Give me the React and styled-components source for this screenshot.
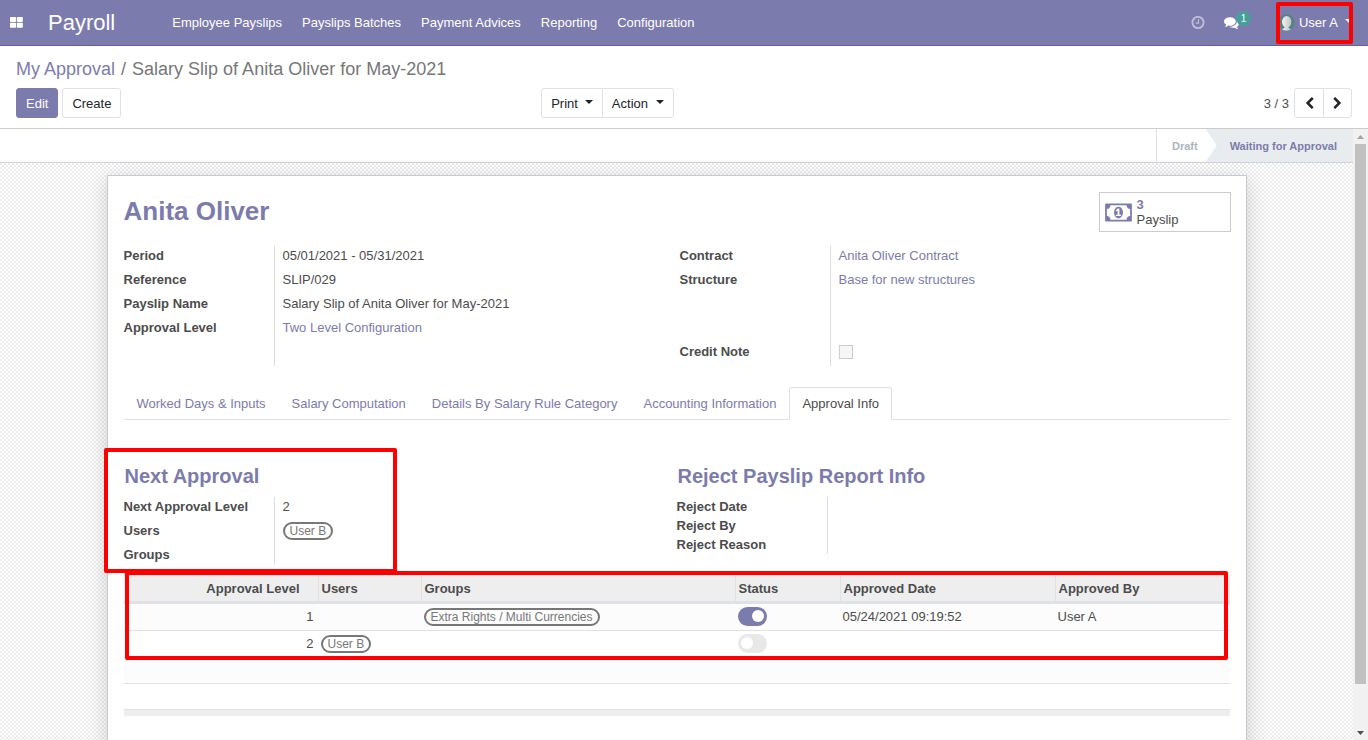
import React from "react";
import styled, { createGlobalStyle } from "styled-components";

const GlobalStyle = createGlobalStyle`
  *, *::before, *::after { box-sizing: border-box; }
  body {
    margin: 0;
    font: 13px/19px "Liberation Sans", Arial, sans-serif;
    color: #4c4c4c;
    background: #fff;
  }
  a { color: #7c7bad; text-decoration: none; }
  button { font: inherit; cursor: pointer; }
  ul, dl, dd { margin: 0; padding: 0; list-style: none; }
`;

const Page = styled.div`
  display: flex;
  flex-direction: column;
  height: 100vh;
`;

const Highlight = styled.div`
  position: absolute;
  inset: ${(p) => p.$inset};
  border: 4px solid #f00;
  border-radius: 2px;
  pointer-events: none;
`;

/* Navigation bar */
const Navbar = styled.header`
  display: flex;
  align-items: center;
  flex-shrink: 0;
  height: 46px;
  background: #7c7bad;
  border-bottom: 1px solid #5f5e97;
  color: #fff;
`;

const AppsButton = styled.button`
  display: flex;
  padding: 0 10px;
  margin-right: 15px;
  border: 0;
  background: none;
  color: #fff;
`;

const Brand = styled.a`
  color: #fff;
  font-size: 22px;
  line-height: 44px;
  margin-right: 47px;
`;

const Menu = styled.nav`
  display: flex;
  flex: 1;
`;

const MenuLink = styled.a`
  padding: 0 10px;
  line-height: 44px;
  color: #fff;
`;

const Systray = styled.div`
  display: flex;
  align-items: center;
  height: 100%;
`;

const TrayButton = styled.button`
  display: flex;
  align-items: center;
  position: relative;
  padding: 0;
  margin-right: ${(p) => p.$space}px;
  border: 0;
  background: none;
  color: #fff;
  opacity: ${(p) => (p.$muted ? 0.5 : 1)};
`;

const Badge = styled.span`
  position: absolute;
  left: 12px;
  top: -4px;
  width: 15px;
  height: 15px;
  border-radius: 8px;
  background: #45a09b;
  font-size: 10px;
  line-height: 15px;
  text-align: center;
`;

const UserBox = styled.div`
  position: relative;
  display: flex;
  height: 100%;
  padding: 0 15px 0 3px;
`;

const UserButton = styled.button`
  display: flex;
  align-items: center;
  gap: 4px;
  padding: 0;
  border: 0;
  background: none;
  color: #fff;
`;

const Caret = styled.span`
  width: 0;
  margin-left: ${(p) => p.$space || 0}px;
  margin-bottom: 3px;
  border: 4px solid transparent;
  border-top-color: currentColor;
  border-bottom: 0;
`;

/* Control panel */
const ControlPanel = styled.section`
  flex-shrink: 0;
  padding: 12px 16px 10px;
  border-bottom: 1px solid #ccc;
`;

const Breadcrumb = styled.nav`
  display: flex;
  gap: 6px;
  margin-bottom: 8px;
  font-size: 18px;
  line-height: 22px;
  color: #777;
`;

const PanelRow = styled.div`
  display: flex;
  align-items: center;
  justify-content: space-between;
`;

const PanelLeft = styled.div`
  display: flex;
  justify-content: space-between;
  width: 50%;
  padding-right: 10px;
`;

const Group = styled.div`
  display: flex;
  align-items: center;
  gap: ${(p) => p.$gap || 0}px;
`;

const Button = styled.button`
  display: flex;
  align-items: center;
  justify-content: center;
  height: 30px;
  padding: 0 9px;
  border: 1px solid ${(p) => (p.$primary ? "#7c7bad" : "#dee2e6")};
  border-radius: 3px;
  background: ${(p) => (p.$primary ? "#7c7bad" : "#fff")};
  color: ${(p) => (p.$primary ? "#fff" : "#212529")};
`;

const Joined = styled.div`
  display: flex;
  ${Button} + ${Button} {
    margin-left: -1px;
  }
  ${Button}:first-child {
    border-radius: 3px 0 0 3px;
  }
  ${Button}:last-child {
    border-radius: 0 3px 3px 0;
  }
`;

const PagerButton = styled(Button)`
  width: 30px;
  padding: 0;
  &:last-child {
    width: 29px;
  }
`;

/* Scrolling content */
const Content = styled.div`
  display: flex;
  flex: 1;
  min-height: 0;
`;

const FormView = styled.main`
  flex: 1;
  min-width: 0;
  overflow: hidden;
  background: repeating-conic-gradient(#ececec 0 25%, #fff 0 50%) 0 0 / 4px 4px;
`;

const ScrollTrack = styled.div`
  display: flex;
  flex-direction: column;
  align-items: center;
  width: 15px;
  background: #f1f1f1;
`;

const ScrollArrow = styled.span`
  display: flex;
  align-items: center;
  height: 15px;
  color: ${(p) => (p.$end ? "#505050" : "#a3a3a3")};
`;

const ScrollThumb = styled.div`
  width: 11px;
  flex: 13;
  background: #c1c1c1;
`;

const ScrollRest = styled.div`
  flex: 1;
`;

const StatusBar = styled.ul`
  display: flex;
  justify-content: flex-end;
  height: 34px;
  border-bottom: 1px solid #ced4da;
  background: #fff;
  font-size: 11px;
  font-weight: bold;
  line-height: 34px;
`;

const Stage = styled.li`
  padding: ${(p) => (p.$active ? "0 16px 0 24px" : "0 8px 0 15px")};
  border-left: ${(p) => (p.$active ? "0" : "1px solid #dee2e6")};
  background: ${(p) => (p.$active ? "#e9ecef" : "#fff")};
  color: ${(p) => (p.$active ? "#7c7bad" : "#adb5bd")};
  clip-path: ${(p) =>
    p.$active ? "polygon(0 0, 100% 0, 100% 100%, 0 100%, 11px 50%)" : "none"};
`;

const Sheet = styled.div`
  max-width: 1140px;
  min-height: 650px;
  margin: 12px auto;
  padding: 16px;
  border: 1px solid #c8c8d3;
  background: #fff;
  box-shadow: 0 5px 20px rgba(0, 0, 0, 0.17);
`;

const SheetHead = styled.div`
  display: flex;
  justify-content: space-between;
  margin-bottom: 14px;
`;

const Title = styled.h1`
  margin: 0;
  font-size: 26px;
  line-height: 38px;
  color: #7c7bad;
`;

const StatButton = styled.button`
  display: flex;
  align-items: center;
  gap: 5px;
  width: 132px;
  height: 40px;
  padding: 0 5px;
  margin-right: -1px;
  border: 1px solid #ccc;
  background: #fff;
  color: #7c7bad;
  line-height: 15px;
  text-align: left;
`;

const StatText = styled.span`
  color: #4c4c4c;
`;

const StatValue = styled.strong`
  display: block;
  color: #7c7bad;
`;

const Columns = styled.div`
  display: grid;
  grid-template-columns: 1fr 1fr;
  column-gap: ${(p) => p.$gap || 0}px;
`;

const Section = styled.section`
  position: relative;
`;

const Fields = styled.dl`
  display: flex;
  flex-direction: column;
`;

const FieldRow = styled.div`
  display: grid;
  grid-template-columns: 150px 1fr;
  height: ${(p) => p.$height || 24}px;
`;

const FieldLabel = styled.dt`
  font-weight: bold;
`;

const FieldValue = styled.dd`
  padding-left: 8px;
  border-left: 1px solid #ddd;
`;

const TickBox = styled.input`
  appearance: none;
  display: block;
  width: 14px;
  height: 14px;
  margin: 3px 0 0;
  border: 1px solid #ccc;
  background: #f6f6f6;
`;

const Tabs = styled.nav`
  display: flex;
  margin: 21px 0 41px;
  height: 33px;
  border-bottom: 1px solid #dee2e6;
`;

const Tab = styled.a`
  height: 33px;
  padding: 0 12px;
  border: 1px solid ${(p) => (p.$active ? "#dee2e6" : "transparent")};
  border-bottom-color: ${(p) => (p.$active ? "#fff" : "transparent")};
  border-radius: 3px 3px 0 0;
  line-height: 31px;
  color: ${(p) => (p.$active ? "#4c4c4c" : "#7c7bad")};
`;

const Heading = styled.h2`
  margin: 0 1px 6px;
  font-size: 20px;
  line-height: 30px;
  color: #7c7bad;
`;

const Tag = styled.span`
  display: inline-block;
  height: 18px;
  margin-top: 1px;
  padding: 0 5px;
  border: 2px solid #777;
  border-radius: 9px;
  font-size: 12px;
  line-height: 14px;
  color: #777;
  vertical-align: top;
`;

const TableWrap = styled.div`
  position: relative;
  margin-top: 10px;
`;

const Table = styled.table`
  width: 100%;
  table-layout: fixed;
  border-collapse: separate;
  border-spacing: 0;
`;

const Col = styled.col`
  width: ${(p) => (p.$width ? `${p.$width}px` : "auto")};
`;

const HeadCell = styled.th`
  height: 29px;
  padding: ${(p) => (p.$number ? "0 18px 0 0" : "0 3px")};
  border-top: 1px solid #dee2e6;
  border-left: ${(p) => (p.$number ? "0" : "1px solid #dee2e6")};
  border-bottom: 3px solid #dee2e6;
  background: #eee;
  text-align: ${(p) => (p.$number ? "right" : "left")};
`;

const Row = styled.tr`
  background: ${(p) => (p.$striped ? "#fcfcfc" : "#fff")};
`;

const Cell = styled.td`
  height: ${(p) => (p.$blank ? 26 : 27)}px;
  padding: 0 ${(p) => (p.$number ? 4 : 3)}px 2px;
  border-bottom: 1px solid #dee2e6;
  text-align: ${(p) => (p.$number ? "right" : "left")};
`;

const FootCell = styled.td`
  height: 6px;
  padding: 0;
  background: #eee;
`;

const Toggle = styled.input`
  appearance: none;
  display: flex;
  align-items: center;
  width: 29px;
  height: 19px;
  margin: 0;
  padding: 0 3px;
  justify-content: ${(p) => (p.defaultChecked ? "flex-end" : "flex-start")};
  border-radius: 10px;
  background: ${(p) => (p.defaultChecked ? "#7c7bad" : "#e8e8e8")};
  &::before {
    content: "";
    width: 12px;
    height: 12px;
    border-radius: 50%;
    background: #fff;
  }
`;

const Glyph = ({ d, box = "0 0 1792 1792", width = 13, height = 13 }) => (
  <svg width={width} height={height} viewBox={box} fill="currentColor" aria-hidden="true">
    <path d={d} />
  </svg>
);

const paths = {
  comments:
    "M1408 768q0 139-94 257t-256.5 186.5-353.5 68.5q-86 0-176-16-124 88-278 128-36 9-86 16h-3q-11 0-20.5-8t-11.5-21q-1-3-1-6.5t.5-6.5 2-6l2.5-5 3.5-5.5 4-5 4.5-5 4-4.5q5-6 23-25t26-29.5 22.5-29 25-38.5 20.5-44q-124-72-195-177t-71-224q0-139 94-257t256.5-186.5 353.5-68.5 353.5 68.5 256.5 186.5 94 257zm384 256q0 120-71 224.5t-195 176.5q10 24 20.5 44t25 38.5 22.5 29 26 29.5 23 25q1 1 4 4.5t4.5 5 4 5 3.5 5.5l2.5 5 2 6 .5 6.5-1 6.5q-3 14-13 22t-22 7q-50-7-86-16-154-40-278-128-90 16-176 16-271 0-472-132 58 4 88 4 161 0 309-45t264-129q125-92 192-212t67-254q0-77-23-152 129 71 204 178t75 230z",
  money:
    "M768 1152h384v-96h-128v-448h-114l-148 137 77 80q42-37 55-57h2v288h-128v96zm512-256q0 70-21 142t-59.5 134-101.5 101-138 39-138-39-101.5-101-59.5-134-21-142 21-142 59.5-134 101.5-101 138-39 138 39 101.5 101 59.5 134 21 142zm512 256v-512q-106 0-181-75t-75-181h-1152q0 106-75 181t-181 75v512q106 0 181 75t75 181h1152q0-106 75-181t181-75zm128-832v1152q0 26-19 45t-45 19h-1792q-26 0-45-19t-19-45v-1152q0-26 19-45t45-19h1792q26 0 45 19t19 45z",
  left:
    "M1427 301l-531 531 531 531q19 19 19 45t-19 45l-166 166q-19 19-45 19t-45-19l-742-742q-19-19-19-45t19-45l742-742q19-19 45-19t45 19l166 166q19 19 19 45t-19 45z",
  right:
    "M1363 877l-742 742q-19 19-45 19t-45-19l-166-166q-19-19-19-45t19-45l531-531-531-531q-19-19-19-45t19-45l166-166q19-19 45-19t45 19l742 742q19 19 19 45t-19 45z",
};

const AppsIcon = () => (
  <svg width="13" height="11" viewBox="0 0 13 11" fill="currentColor" aria-hidden="true">
    <rect width="6" height="5" rx="0.8" />
    <rect x="6.8" width="6" height="5" rx="0.8" />
    <rect y="5.8" width="6" height="5" rx="0.8" />
    <rect x="6.8" y="5.8" width="6" height="5" rx="0.8" />
  </svg>
);

const ClockIcon = () => (
  <svg width="14" height="14" viewBox="0 0 14 14" fill="none" stroke="currentColor" aria-hidden="true">
    <circle cx="7" cy="6.5" r="5.6" strokeWidth="1.9" />
    <path d="M7.5 3.1v4H4.6" strokeWidth="1.2" />
  </svg>
);

const Avatar = () => (
  <svg width="16" height="17" viewBox="0 0 16 17" aria-hidden="true">
    <defs>
      <linearGradient id="bust">
        <stop offset="0" stopColor="#f4f4f4" />
        <stop offset="1" stopColor="#bcc4c3" />
      </linearGradient>
      <clipPath id="round">
        <circle cx="7.5" cy="8.5" r="8.2" />
      </clipPath>
    </defs>
    <g clipPath="url(#round)">
      <rect width="16" height="17" fill="#56837f" />
      <ellipse cx="7.7" cy="7.8" rx="4.7" ry="5.8" fill="url(#bust)" />
      <path d="M5.5 12h4v2l3.5 1.5V17H2v-1.5L5.5 14z" fill="url(#bust)" />
    </g>
  </svg>
);

const menuItems = [
  "Employee Payslips",
  "Payslips Batches",
  "Payment Advices",
  "Reporting",
  "Configuration",
];

const tabs = [
  "Worked Days & Inputs",
  "Salary Computation",
  "Details By Salary Rule Category",
  "Accounting Information",
  "Approval Info",
];

const approvals = [
  { level: 1, group: "Extra Rights / Multi Currencies", done: true, date: "05/24/2021 09:19:52", by: "User A" },
  { level: 2, user: "User B", done: false },
];

const Field = ({ label, height, children }) => (
  <FieldRow $height={height}>
    <FieldLabel>{label}</FieldLabel>
    <FieldValue>{children}</FieldValue>
  </FieldRow>
);

export default function App() {
  return (
    <Page>
      <GlobalStyle />
      <Navbar>
        <AppsButton aria-label="Applications"><AppsIcon /></AppsButton>
        <Brand href="#payroll">Payroll</Brand>
        <Menu>
          {menuItems.map((item) => (
            <MenuLink key={item} href="#menu">{item}</MenuLink>
          ))}
        </Menu>
        <Systray>
          <TrayButton $space={19} $muted aria-label="Activities"><ClockIcon /></TrayButton>
          <TrayButton $space={37} aria-label="Conversations">
            <Glyph d={paths.comments} width={15} height={15} />
            <Badge>1</Badge>
          </TrayButton>
          <UserBox>
            <UserButton>
              <Avatar />
              <span>User A</span>
              <Caret $space={3} />
            </UserButton>
            <Highlight $inset="2px 15px 1px 0" />
          </UserBox>
        </Systray>
      </Navbar>

      <ControlPanel>
        <Breadcrumb>
          <a href="#approval">My Approval</a>
          <span>/</span>
          <span>Salary Slip of Anita Oliver for May-2021</span>
        </Breadcrumb>
        <PanelRow>
          <PanelLeft>
            <Group $gap={4}>
              <Button $primary>Edit</Button>
              <Button>Create</Button>
            </Group>
            <Joined>
              <Button>Print<Caret $space={7} /></Button>
              <Button>Action<Caret $space={8} /></Button>
            </Joined>
          </PanelLeft>
          <Group $gap={5}>
            <span>3 / 3</span>
            <Joined>
              <PagerButton aria-label="Previous"><Glyph d={paths.left} /></PagerButton>
              <PagerButton aria-label="Next"><Glyph d={paths.right} /></PagerButton>
            </Joined>
          </Group>
        </PanelRow>
      </ControlPanel>

      <Content>
        <FormView>
          <StatusBar>
            <Stage>Draft</Stage>
            <Stage $active>Waiting for Approval</Stage>
          </StatusBar>
          <Sheet>
            <SheetHead>
              <Title>Anita Oliver</Title>
              <StatButton>
                <Glyph d={paths.money} box="0 0 1920 1792" width={27} height={25} />
                <StatText>
                  <StatValue>3</StatValue>
                  Payslip
                </StatText>
              </StatButton>
            </SheetHead>

            <Columns $gap={6}>
              <Fields>
                <Field label="Period">05/01/2021 - 05/31/2021</Field>
                <Field label="Reference">SLIP/029</Field>
                <Field label="Payslip Name">Salary Slip of Anita Oliver for May-2021</Field>
                <Field label="Approval Level" height={48}>
                  <a href="#config">Two Level Configuration</a>
                </Field>
              </Fields>
              <Fields>
                <Field label="Contract"><a href="#contract">Anita Oliver Contract</a></Field>
                <Field label="Structure" height={72}><a href="#structure">Base for new structures</a></Field>
                <Field label={<label htmlFor="credit-note">Credit Note</label>}>
                  <TickBox id="credit-note" type="checkbox" disabled />
                </Field>
              </Fields>
            </Columns>

            <Tabs>
              {tabs.map((tab) => (
                <Tab key={tab} href="#tab" $active={tab === "Approval Info"}>{tab}</Tab>
              ))}
            </Tabs>

            <Columns>
              <Section>
                <Heading>Next Approval</Heading>
                <Fields>
                  <Field label="Next Approval Level">2</Field>
                  <Field label="Users"><Tag>User B</Tag></Field>
                  <Field label="Groups" height={20} />
                </Fields>
                <Highlight $inset="-13px 280px -8px -20px" />
              </Section>
              <Section>
                <Heading>Reject Payslip Report Info</Heading>
                <Fields>
                  <Field label="Reject Date" height={19} />
                  <Field label="Reject By" height={19} />
                  <Field label="Reject Reason" height={19} />
                </Fields>
              </Section>
            </Columns>

            <TableWrap>
              <Table>
                <colgroup>
                  <Col $width={194} />
                  <Col $width={103} />
                  <Col />
                  <Col $width={105} />
                  <Col $width={215} />
                  <Col $width={175} />
                </colgroup>
                <thead>
                  <tr>
                    <HeadCell $number>Approval Level</HeadCell>
                    <HeadCell>Users</HeadCell>
                    <HeadCell>Groups</HeadCell>
                    <HeadCell>Status</HeadCell>
                    <HeadCell>Approved Date</HeadCell>
                    <HeadCell>Approved By</HeadCell>
                  </tr>
                </thead>
                <tbody>
                  {approvals.map((row, i) => (
                    <Row key={row.level} $striped={i % 2 === 0}>
                      <Cell $number>{row.level}</Cell>
                      <Cell>{row.user && <Tag>{row.user}</Tag>}</Cell>
                      <Cell>{row.group && <Tag>{row.group}</Tag>}</Cell>
                      <Cell>
                        <Toggle
                          type="checkbox"
                          role="switch"
                          aria-label={`Level ${row.level} approved`}
                          defaultChecked={row.done}
                        />
                      </Cell>
                      <Cell>{row.date}</Cell>
                      <Cell>{row.by}</Cell>
                    </Row>
                  ))}
                  <Row $striped><Cell $blank colSpan={6} /></Row>
                  <Row><Cell $blank colSpan={6} /></Row>
                </tbody>
                <tfoot>
                  <tr><FootCell colSpan={6} /></tr>
                </tfoot>
              </Table>
              <Highlight $inset="-4px 2px 56px 1px" />
            </TableWrap>
          </Sheet>
        </FormView>
        <ScrollTrack aria-hidden="true">
          <ScrollArrow>
            <svg width="7" height="4" viewBox="0 0 7 4" fill="currentColor"><path d="M0 4 3.5 0 7 4z" /></svg>
          </ScrollArrow>
          <ScrollThumb />
          <ScrollRest />
          <ScrollArrow $end>
            <svg width="7" height="4" viewBox="0 0 7 4" fill="currentColor"><path d="M0 0h7L3.5 4z" /></svg>
          </ScrollArrow>
        </ScrollTrack>
      </Content>
    </Page>
  );
}
